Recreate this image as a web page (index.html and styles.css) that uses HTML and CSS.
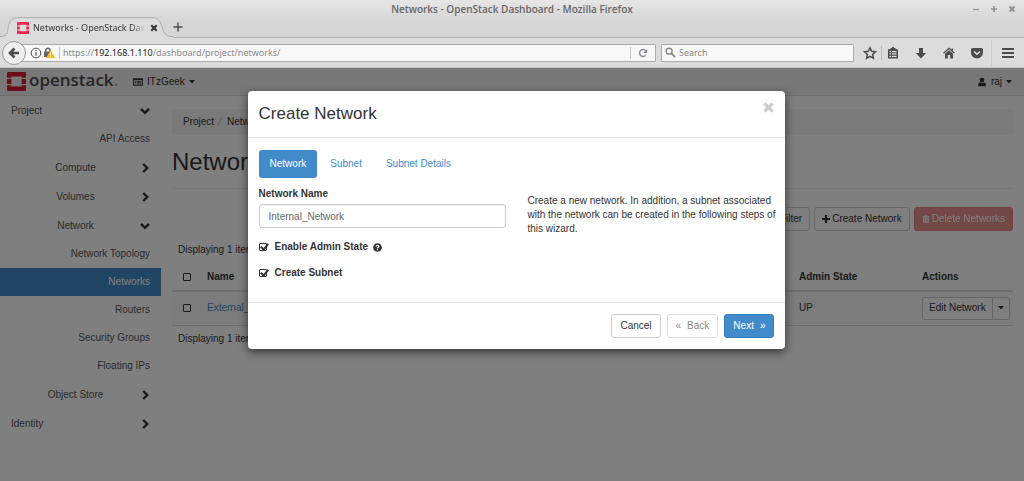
FILE: index.html
```html
<!DOCTYPE html>
<html lang="en">
<head>
<meta charset="utf-8">
<title>Networks - OpenStack Dashboard</title>
<link rel="stylesheet" href="styles.css">
</head>
<body>
<svg class="defs" aria-hidden="true">
  <symbol id="down" viewBox="0 0 10 10"><path d="M1 2.800 5 6.800 9 2.800" fill="none" stroke="currentColor" stroke-width="2.400"/></symbol>
  <symbol id="right" viewBox="0 0 10 10"><path d="M3.200 1 7.200 5 3.200 9" fill="none" stroke="currentColor" stroke-width="2.400"/></symbol>
  <symbol id="caret" viewBox="0 0 6 4"><path d="M0 0h6L3 3.400z" fill="currentColor"/></symbol>
  <symbol id="mark" viewBox="0 0 20 20"><path d="M1.400 0h17.200Q20 0 20 1.400V6h-4.600V4.700H4.600V6H0V1.400Q0 0 1.400 0zM0 7.300h4.600v5.400H0zM15.400 7.300H20v5.400h-4.600zM0 14h4.600v1.300h10.800V14H20v4.600q0 1.400-1.400 1.400H1.400Q0 20 0 18.600z" fill="currentColor"/></symbol>
</svg>
<header class="browser">
  <div class="titlebar">
    <span class="window-title">Networks - OpenStack Dashboard - Mozilla Firefox</span>
    <div class="window-buttons">
      <button aria-label="Minimize"><svg viewBox="0 0 8 8"><path d="M1 4.500h6" stroke="currentColor" stroke-width="1.200"/></svg></button>
      <button aria-label="Maximize"><svg viewBox="0 0 8 8"><path d="M1 4h6M4 1v6" stroke="currentColor" stroke-width="1.600"/></svg></button>
      <button aria-label="Close"><svg viewBox="0 0 8 8"><path d="m1.500 1.500 5 5m0-5-5 5" stroke="currentColor" stroke-width="1.800"/></svg></button>
    </div>
  </div>
  <div class="tabs">
    <div class="tab">
      <svg class="tab-shape" viewBox="0 0 176 22" preserveAspectRatio="none"><path d="M0 21C9 21 7 15 9 8Q11 1 18 1H155Q162 1 164 8C167 15 166 21 176 21V22H0z" fill="#dcdcdc"/><path d="M0 20.500C9 20.500 7 15 9 8Q11 .7 18 .7H155Q162 .7 164 8C167 15 166 20.500 176 20.500" fill="none" stroke="#a9a9a9"/></svg>
      <svg class="favicon"><use href="#mark"/></svg>
      <span class="tab-title">Networks - OpenStack Dashboard</span>
      <button class="tab-close" aria-label="Close tab"><svg viewBox="0 0 8 8"><path d="m1.300 1.300 5.400 5.400m0-5.400L1.300 6.700" stroke="currentColor" stroke-width="2"/></svg></button>
    </div>
    <button class="new-tab" aria-label="New tab"><svg viewBox="0 0 10 10"><path d="M.5 5h9M5 .5v9" stroke="currentColor" stroke-width="1.500"/></svg></button>
  </div>
  <div class="toolbar">
    <button class="back" aria-label="Go back"><svg viewBox="0 0 12 12"><path d="M6.500 1.500 2 6l4.500 4.500M2.500 6H11" fill="none" stroke="currentColor" stroke-width="2.600"/></svg></button>
    <div class="address">
      <svg class="info" viewBox="0 0 12 12"><circle cx="6" cy="6" r="4.800" fill="none" stroke="currentColor"/><path d="M6 5.200v3.500M6 3v1.200" stroke="currentColor" stroke-width="1.200"/></svg>
      <svg class="lock" viewBox="0 0 12 12"><path d="M2.700 5V3.500a2.200 2.200 0 0 1 4.400 0V5" fill="none" stroke="#666" stroke-width="1.400"/><path d="M1 4.500h7.500V10H1z" fill="#666"/><path d="M7.500 3.200 12 11H3z" fill="#fcb711"/><path d="M7.500 5.800v2.600m0 .8v1" stroke="#fff"/></svg>
      <span class="divider"></span>
      <span class="url">https://<b>192.168.1.110</b>/dashboard/project/networks/</span>
      <span class="divider"></span>
      <button class="reload" aria-label="Reload"><svg viewBox="0 0 10 10"><path d="M7.700 7.300A3.500 3.500 0 1 1 7.700 2.700" fill="none" stroke="currentColor" stroke-width="1.500"/><path d="M9.200 1v4h-4z" fill="currentColor"/></svg></button>
    </div>
    <label class="search"><svg viewBox="0 0 12 12"><circle cx="4.500" cy="4.500" r="3.200" fill="none" stroke="currentColor" stroke-width="1.500"/><path d="m7 7 4 4" stroke="currentColor" stroke-width="2"/></svg><input type="search" placeholder="Search" aria-label="Search"></label>
    <div class="tools">
      <button class="star" aria-label="Bookmark"><svg viewBox="0 0 14 14"><path d="m7 1.800 1.600 3.500 3.900.5-2.900 2.600.8 3.800L7 10.300l-3.400 1.900.8-3.800-2.900-2.600 3.900-.5z" fill="none" stroke="currentColor" stroke-width="1.500"/></svg></button>
      <button class="list" aria-label="Bookmarks list"><svg viewBox="0 0 14 14"><path d="M2 3.200h2.500V2h1.300a1.200 1.200 0 0 1 2.400 0h1.300v1.200H12v9.300H2zM3.500 5v1.300H5V5zm2.300 0v1.300h4.700V5zM3.500 7.300v1.300H5V7.300zm2.300 0v1.300h4.700V7.300zM3.500 9.700V11H5V9.700zm2.300 0V11h4.700V9.700z" fill="currentColor" fill-rule="evenodd"/></svg></button>
      <button aria-label="Downloads"><svg viewBox="0 0 14 14"><path d="M5 2h4v5h3.200L7 12.500 1.800 7H5z" fill="currentColor"/></svg></button>
      <button aria-label="Home"><svg viewBox="0 0 14 14"><path d="m1.500 7.300 5.500-5 5.500 5" fill="none" stroke="currentColor" stroke-width="1.300"/><path d="m3 7.800 4-3.600 4 3.600v4.700H8.200V9H5.800v3.500H3zM9.500 2.500H11v3L9.500 4z" fill="currentColor"/></svg></button>
      <button aria-label="Pocket"><svg viewBox="0 0 14 14"><path d="M1 3.500Q1 2 2.500 2h9Q13 2 13 3.500V6.500a6 6 0 0 1-12 0z" fill="currentColor"/><path d="m4 5.500 3 2.800 3-2.800" fill="none" stroke="#ddd" stroke-width="1.500"/></svg></button>
      <button class="menu" aria-label="Menu"><svg viewBox="0 0 14 14"><path d="M1 3h12M1 7h12M1 11h12" stroke="currentColor" stroke-width="2"/></svg></button>
    </div>
  </div>
</header>

<div class="page">
  <nav class="navbar">
    <a class="brand" href="#"><svg><use href="#mark"/></svg><span>openstack<i>.</i></span></a>
    <button class="nav-item"><svg class="icon" viewBox="0 0 11 10"><path d="M0 1h11v8H0zm1 2v5h9V3zm1 .8h1.200v.9H2zm2 0h5v.9H4zM2 5.300h1.200v.9H2zm2 0h5v.9H4zM2 6.700h1.200v.8H2zm2 0h5v.8H4z" fill="currentColor" fill-rule="evenodd"/></svg>ITzGeek<svg class="caret"><use href="#caret"/></svg></button>
    <button class="nav-item user"><svg class="icon" viewBox="0 0 9 10"><path d="M4.500.8a2.300 2.300 0 0 1 2.200 2.700c-.1 1.200-.7 2-2.200 2S2.400 4.700 2.300 3.500A2.300 2.300 0 0 1 4.500.8zM2.500 5.200Q4.500 7 6.500 5.200 8.500 5.500 8.500 8.500L8 9.300H1L.5 8.500Q.5 5.500 2.500 5.200z" fill="currentColor"/></svg>raj<svg class="caret"><use href="#caret"/></svg></button>
  </nav>
  <div class="content">
    <nav class="sidebar">
      <a class="section top" href="#">Project<svg><use href="#down"/></svg></a>
      <a class="leaf" href="#">API Access</a>
      <a class="section" href="#"><span>Compute</span><svg><use href="#right"/></svg></a>
      <a class="section" href="#"><span>Volumes</span><svg><use href="#right"/></svg></a>
      <a class="section" href="#"><span>Network</span><svg><use href="#down"/></svg></a>
      <a class="leaf" href="#">Network Topology</a>
      <a class="leaf active" href="#">Networks</a>
      <a class="leaf" href="#">Routers</a>
      <a class="leaf" href="#">Security Groups</a>
      <a class="leaf" href="#">Floating IPs</a>
      <a class="section" href="#"><span>Object Store</span><svg><use href="#right"/></svg></a>
      <a class="section top" href="#">Identity<svg><use href="#right"/></svg></a>
    </nav>
    <main class="main">
      <div class="breadcrumb"><span>Project</span><i>/</i><span>Network</span></div>
      <h1>Networks</h1>
      <div class="actions">
        <button class="btn">Filter</button>
        <button class="btn"><svg class="plus" viewBox="0 0 8 8"><path d="M0 4h8M4 0v8" stroke="currentColor" stroke-width="2.200"/></svg>Create Network</button>
        <button class="btn danger" disabled><svg class="trash" viewBox="0 0 8 9"><path d="M0 1.500h2.500V.3h3v1.200H8v1H0zM.8 3h6.400v5.700H.8z" fill="currentColor"/><path d="M2.400 4v3.700M4 4v3.700M5.600 4v3.700" stroke="#d9534f" stroke-width=".7"/></svg>Delete Networks</button>
      </div>
      <p class="count">Displaying 1 item</p>
      <table>
        <thead><tr><th class="pick"><input type="checkbox" aria-label="Select all"></th><th class="name">Name</th><th class="state">Admin State</th><th class="act">Actions</th></tr></thead>
        <tbody><tr><td class="pick"><input type="checkbox" aria-label="Select External_Network"></td><td><a href="#">External_Network</a></td><td>UP</td><td><div class="split"><button class="btn small">Edit Network</button><button class="btn small" aria-label="More actions"><svg class="caret"><use href="#caret"/></svg></button></div></td></tr></tbody>
      </table>
      <p class="count">Displaying 1 item</p>
    </main>
  </div>

  <div class="overlay">
    <form class="modal" role="dialog" aria-labelledby="dialog-title">
      <div class="modal-header"><h2 id="dialog-title">Create Network</h2><button type="button" class="close" aria-label="Close"><svg viewBox="0 0 10 10"><path d="m1.300 1.300 7.400 7.400m0-7.400L1.300 8.700" stroke="currentColor" stroke-width="3"/></svg></button></div>
      <div class="modal-body">
        <div class="steps"><a class="current" href="#">Network</a><a href="#">Subnet</a><a href="#">Subnet Details</a></div>
        <div class="columns">
          <div class="fields">
            <label class="label" for="net-name">Network Name</label>
            <input class="text" id="net-name" type="text" value="Internal_Network">
            <label class="check"><input type="checkbox" checked>Enable Admin State<svg class="help" viewBox="0 0 10 10"><circle cx="5" cy="5" r="4.800" fill="currentColor"/><path d="M3.400 3.900Q3.500 2.500 5 2.500T6.600 3.800Q6.600 4.600 5 5.300V6M5 6.700V8" fill="none" stroke="#fff" stroke-width="1.300"/></svg></label>
            <label class="check"><input type="checkbox" checked>Create Subnet</label>
          </div>
          <p class="help-text">Create a new network. In addition, a subnet associated with the network can be created in the following steps of this wizard.</p>
        </div>
      </div>
      <div class="modal-footer"><button type="button" class="btn">Cancel</button><button type="button" class="btn muted" disabled><span>«</span>Back</button><button type="button" class="btn primary">Next<span>»</span></button></div>
    </form>
  </div>
</div>
</body>
</html>
```
FILE: styles.css
```css
* { box-sizing: border-box; }
body { margin: 0; min-height: 100vh; display: flex; flex-direction: column; font: 10px/14px "Liberation Sans", Arial, sans-serif; color: #333; background: #fff; }
button, input { font: inherit; color: inherit; }
button { border: 0; padding: 0; background: none; display: inline-flex; align-items: center; justify-content: center; }
a { color: #428bca; text-decoration: none; }
svg { display: block; flex: none; }
h1, h2, p { margin: 0; font-weight: 400; }
.defs { position: absolute; width: 0; height: 0; }

.browser { font: 9px/14px "Noto Sans", "Open Sans", sans-serif; color: #4c4c4c; background: linear-gradient(#e6e6e6, #d6d6d6 20px, #d6d6d6); }
.titlebar { height: 17px; display: grid; grid-template-columns: 1fr auto 1fr; align-items: center; }
.window-title { grid-column: 2; font-family: "Open Sans", sans-serif; font-size: 10px; font-weight: 600; color: #666; }
.window-buttons { display: flex; justify-content: flex-end; gap: 10px; padding-right: 8px; color: #8f8f8f; }
.window-buttons svg { width: 8px; height: 8px; }
.tabs { display: flex; height: 21px; border-bottom: 1px solid #b0b0b0; }
.tab { position: relative; width: 173px; height: 21px; display: flex; align-items: center; padding: 0 15px 0 17px; color: #333; }
.tab-shape { position: absolute; inset: 0; width: 100%; height: 100%; }
.tab > :not(.tab-shape) { position: relative; }
.favicon { width: 12px; height: 12px; color: #ee2350; }
.tab-title { flex: 1; margin: 0 5px 0 4px; overflow: hidden; white-space: nowrap; -webkit-mask-image: linear-gradient(90deg, #000 88%, transparent); mask-image: linear-gradient(90deg, #000 88%, transparent); }
.tab-close svg { width: 8px; height: 8px; }
.new-tab svg { width: 10px; height: 10px; }
.toolbar { height: 30px; display: flex; align-items: center; padding: 0 9px 0 2px; background: #dcdcdc; border-bottom: 1px solid #c4c4c4; }
.back { position: relative; width: 24px; height: 24px; flex: none; border: 1px solid #999; border-radius: 50%; background: #eee; }
.back svg { width: 12px; height: 12px; }
.address, .search { height: 18px; display: flex; align-items: center; border: 1px solid #aaa; border-radius: 1px; background: #f8f8f8; }
.address { flex: 1; margin-left: -5px; padding-left: 8px; }
.info { width: 12px; height: 12px; }
.lock { width: 12px; height: 12px; margin: 0 4px 0 1px; }
.divider { width: 1px; height: 12px; background: #c4c4c4; }
.url { flex: 1; padding-left: 3px; color: #888; }
.url b { font-weight: 400; color: #222; }
.reload { width: 24px; color: #8590a0; }
.reload svg { width: 10px; height: 10px; }
.search { width: 193px; margin-left: 5px; padding: 0 3px; color: #888; }
.search svg { width: 11px; height: 11px; }
.search input { flex: 1; min-width: 0; padding: 0 3px; border: 0; background: none; }
.search input::placeholder { color: #888; }
.tools { display: flex; align-items: center; padding-left: 9px; }
.tools svg { width: 14px; height: 14px; }
.tools button { padding: 0 7px; }
.tools .star { padding: 0 4px 0 0; }
.tools .list { padding-left: 4px; border-left: 1px solid #bbb; }
.tools .menu { height: 26px; padding: 0 0 0 9px; border-left: 1px solid #ccc; }

.page { position: relative; flex: 1; display: flex; flex-direction: column; }
.navbar { height: 28px; display: flex; align-items: center; padding: 0 12px 0 7px; background: #f0f0f0; border-bottom: 1px solid #d8d8d8; }
.brand { display: flex; align-items: center; gap: 3px; width: 126px; font: 600 17px/24px "Open Sans", sans-serif; color: #4c4c4c; }
.brand span { padding-bottom: 3px; }
.brand svg { width: 19px; height: 19px; color: #da1a32; }
.brand i { font-style: normal; color: #aaa; }
.nav-item { gap: 4px; }
.nav-item .icon { width: 10px; height: 10px; }
.user { margin-left: auto; }
.caret { width: 6px; height: 4px; }
.content { flex: 1; display: flex; }
.sidebar { width: 161px; flex: none; }
.section, .leaf { display: flex; align-items: center; padding: 0 11px; color: #555; }
.section { height: 29px; }
.leaf { height: 28px; justify-content: flex-end; }
.section span { flex: 1; text-align: center; }
.section svg { width: 10px; height: 10px; color: #333; }
.top { justify-content: space-between; }
.active { background: #428bca; color: #fff; }
.main { flex: 1; padding: 13px 11px 0; }
.breadcrumb { height: 26px; display: flex; align-items: center; gap: 4px; padding: 0 11px; background: #f5f5f5; border-radius: 3px; }
.breadcrumb i { color: #aaa; margin-right: 2px; }
h1 { padding: 12px 0; font-size: 24px; line-height: 29px; border-bottom: 1px solid #eee; }
.actions { display: flex; justify-content: flex-end; gap: 4px; margin: 18px 0 12px; }
.btn { height: 24px; padding: 0 8px; border: 1px solid #ccc; border-radius: 3px; background: #fff; white-space: nowrap; }
.actions .btn { padding: 0 7px; }
.plus, .trash { width: 8px; height: 8px; margin-right: 2px; }
.danger { background: #d9534f; border-color: #d43f3a; color: #fff; opacity: .65; }
.count { padding: 0 6px; }
table { width: 100%; margin: 6px 0; border-collapse: collapse; table-layout: fixed; }
th, td { padding: 0 0 0 8px; text-align: left; }
th { height: 28px; border-bottom: 2px solid #ddd; }
td { height: 34px; background: #f9f9f9; border-bottom: 1px solid #ddd; }
.pick { width: 27px; padding-left: 11px; }
.state { width: 123px; }
.act { width: 99px; }
input[type="checkbox"] { appearance: none; display: block; width: 8px; height: 8px; margin: 0; border: 1px solid #333; border-radius: 1px; }
.split { display: flex; }
.small { height: 23px; padding: 0 6px; }
.split .btn:first-child { border-radius: 3px 0 0 3px; }
.split .btn:last-child { margin-left: -1px; padding: 0 5px; border-radius: 0 3px 3px 0; }

.overlay { position: absolute; inset: 0; padding: 23px 0 0 9px; background: rgba(0, 0, 0, .5); }
.modal { width: 53%; margin: 0 auto; border-radius: 4px; background: #fff; box-shadow: 0 3px 10px rgba(0, 0, 0, .6); }
.modal-header { display: flex; justify-content: space-between; align-items: flex-start; padding: 11px; border-bottom: 1px solid #e5e5e5; }
h2 { font-size: 17px; line-height: 24px; }
.close { color: #ccc; }
.close svg { width: 11px; height: 11px; }
.modal-body { padding: 12px 11px 22px; }
.steps { display: flex; gap: 2px; }
.steps a { padding: 7px 11px; border-radius: 3px; }
.steps .current { background: #428bca; color: #fff; }
.columns { display: grid; grid-template-columns: 1fr 1fr; gap: 22px; padding-top: 9px; }
.label { display: block; font-weight: 700; }
.text { display: block; width: 100%; height: 24px; margin: 3px 0 12px; padding: 0 9px; border: 1px solid #ccc; border-radius: 3px; color: #666; box-shadow: inset 0 1px 1px rgba(0, 0, 0, .08); }
.check { display: flex; align-items: center; font-weight: 700; }
.check + .check { margin-top: 12px; }
.check input { margin-right: 8px; position: relative; }
.check input::after { content: ""; position: absolute; left: 2px; top: -2px; width: 3px; height: 6px; border: solid #333; border-width: 0 2px 2px 0; transform: rotate(40deg); }
.help { width: 9px; height: 9px; margin-left: 5px; }
.help-text { margin-right: -8px; padding-top: 7px; }
.modal-footer { display: flex; justify-content: flex-end; gap: 6px; padding: 11px; border-top: 1px solid #e5e5e5; }
.muted { color: #888; border-color: #ddd; }
.muted span { margin-right: 6px; }
.primary { background: #428bca; border-color: #357ebd; color: #fff; }
.primary span { margin-left: 6px; }
```
